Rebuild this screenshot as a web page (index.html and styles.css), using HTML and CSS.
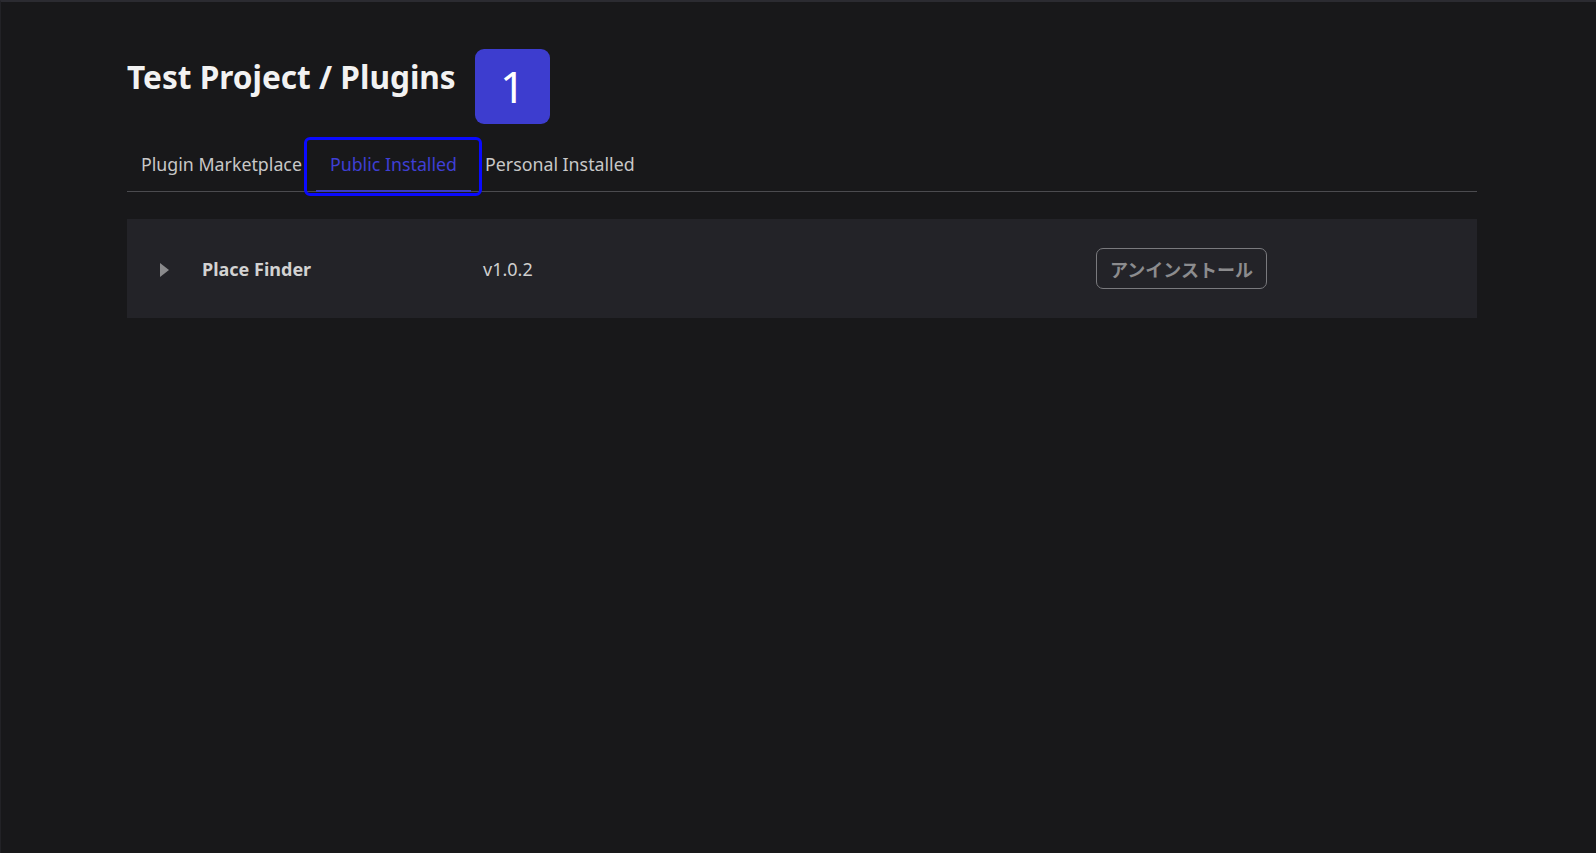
FILE: index.html
```html
<!DOCTYPE html>
<html lang="ja">
<head>
<meta charset="utf-8">
<title>Plugins</title>
<link rel="stylesheet" href="styles.css">
</head>
<body>
<div class="frame">
  <main class="page">
    <h1 class="title">Test Project / Plugins</h1>
    <nav class="tabs">
      <div class="tab">Plugin Marketplace</div>
      <div class="tab tab-active">Public Installed</div>
      <div class="tab">Personal Installed</div>
    </nav>
    <section class="list">
      <div class="row">
        <span class="caret"></span>
        <span class="name">Place Finder</span>
        <span class="version">v1.0.2</span>
        <button class="uninstall">アンインストール</button>
      </div>
    </section>
  </main>
  <div class="marker">1</div>
  <div class="highlight"></div>
</div>
</body>
</html>
```

FILE: styles.css
```css
* { box-sizing: border-box; }
html, body {
  margin: 0;
  padding: 0;
  height: 100%;
  background: #18181a;
}
body {
  font-family: "Noto Sans", "Noto Sans CJK JP", sans-serif;
  color: #c9c9c9;
}
.frame {
  position: relative;
  min-height: 100%;
  border-top: 2px solid #2b2b31;
  border-left: 1px solid #222226;
}
.page {
  padding: 0 119px 0 126px;
}
.title {
  margin: 0;
  padding-top: 53px;
  font-size: 31.6px;
  line-height: 44px;
  font-weight: 700;
  color: #f2f2f2;
}
.tabs {
  display: flex;
  margin-top: 42px;
  border-bottom: 1px solid #4b4b4f;
}
.tab {
  padding: 11px 14px 14px;
  font-size: 17.8px;
  line-height: 24px;
  color: #c8c8c8;
  border-bottom: 2px solid transparent;
  margin-bottom: -1px;
}
.tab-active {
  color: #3f3fd4;
  border-bottom-color: #3b3bc4;
}
.list {
  margin-top: 27px;
}
.row {
  display: flex;
  align-items: center;
  height: 99px;
  background: #232328;
  padding-left: 33px;
}
.caret {
  width: 0;
  height: 0;
  border-top: 7px solid transparent;
  border-bottom: 7px solid transparent;
  border-left: 9px solid #8a8a8c;
  margin-right: 33px;
  margin-top: 2px;
}
.name {
  width: 281px;
  font-size: 18px;
  font-weight: 700;
  color: #d2d2d2;
}
.version {
  width: 613px;
  font-size: 18px;
  color: #cfcfcf;
}
.uninstall {
  width: 171px;
  height: 41px;
  padding: 0;
  background: transparent;
  border: 1px solid #7a7a7e;
  border-radius: 7px;
  font-family: "Noto Sans CJK JP", sans-serif;
  font-size: 18px;
  font-weight: 700;
  color: #8c8c8e;
}
.marker {
  position: absolute;
  left: 474px;
  top: 47px;
  width: 75px;
  height: 75px;
  border-radius: 9px;
  background: #3d3dcf;
  color: #ffffff;
  font-family: "Noto Sans", sans-serif;
  font-size: 44px;
  line-height: 75px;
  text-align: center;
}
.highlight {
  position: absolute;
  left: 303px;
  top: 135px;
  width: 178px;
  height: 59px;
  border: 3px solid #0a0aff;
  border-radius: 6px;
}
```
